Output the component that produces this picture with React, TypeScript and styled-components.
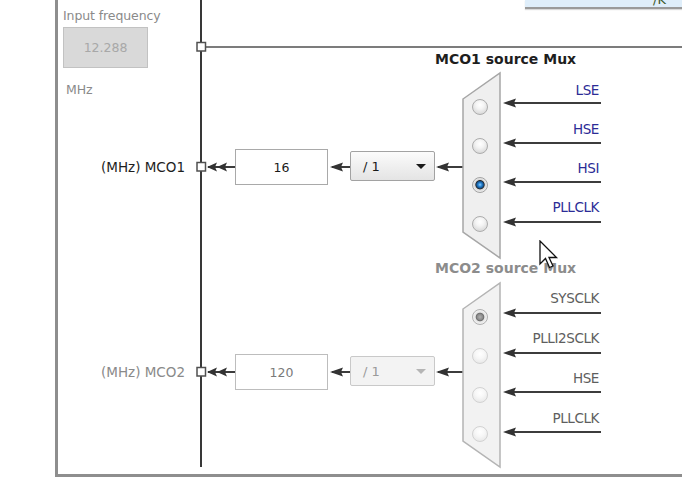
import React from 'react';
import styled, { createGlobalStyle, css } from 'styled-components';

const Global = createGlobalStyle`
  html, body { margin: 0; padding: 0; background: #ffffff; overflow: hidden; }
  body { font-family: "DejaVu Sans", "Liberation Sans", sans-serif; }
`;

const Page = styled.div`
  position: relative;
  width: 682px;
  height: 478px;
  display: flex;
  background: #ffffff;
  overflow: hidden;
`;

const Gutter = styled.div`
  width: 55px;
  flex: none;
`;

const Frame = styled.div`
  flex: 1;
  box-sizing: border-box;
  height: 477px;
  border-left: 3px solid #8e8e8e;
  border-bottom: 3px solid #8e8e8e;
  display: flex;
  flex-direction: column;
  align-items: flex-start;
  padding: 8px 0 0 5px;
`;

const PanelLabel = styled.div<{ $indent?: number; $gap?: number }>`
  font-size: 12.5px;
  line-height: 16px;
  color: #8a8a8a;
  margin-left: ${p => p.$indent ?? 0}px;
  margin-top: ${p => p.$gap ?? 0}px;
  letter-spacing: -0.1px;
`;

const FreqBox = styled.div`
  box-sizing: border-box;
  width: 85px;
  height: 41px;
  margin-top: 3px;
  background: #d9d9d9;
  border: 1px solid #c2c2c2;
  display: flex;
  align-items: center;
  justify-content: center;
  font-size: 12.5px;
  color: #a8a8a8;
`;

/* free canvas of the clock diagram */
const Diagram = styled.div`
  position: absolute;
  inset: 0;
  box-sizing: border-box;
  padding: 52px 0 0 60px;
  display: flex;
  flex-direction: column;
`;

const Wires = styled.svg`
  position: absolute;
  left: 0;
  top: 0;
`;

const Channel = styled.div<{ $bodyHeight: number; $titleGap: number }>`
  position: relative;
  display: grid;
  grid-template-columns: 125px 50px 93px 22px 85px 28px 37px 101px;
  grid-template-rows: 14px ${p => p.$bodyHeight}px;
  row-gap: ${p => p.$titleGap}px;
  align-items: center;
`;

const MuxTitle = styled.div<{ $disabled?: boolean }>`
  grid-column: 6 / -1;
  grid-row: 1;
  line-height: 14px;
  font-size: 14px;
  font-weight: bold;
  white-space: nowrap;
  color: ${p => (p.$disabled ? '#8c8c8c' : '#1e1e1e')};
`;

const RowLabel = styled.div<{ $disabled?: boolean }>`
  grid-column: 1;
  grid-row: 2;
  text-align: right;
  line-height: 16px;
  font-size: 13.5px;
  white-space: nowrap;
  color: ${p => (p.$disabled ? '#8a8a8a' : '#1e1e1e')};
`;

const ValueBox = styled.div<{ $disabled?: boolean }>`
  grid-column: 3;
  grid-row: 2;
  box-sizing: border-box;
  height: 36px;
  background: #ffffff;
  border: 1px solid ${p => (p.$disabled ? '#bdbdbd' : '#a9a9a9')};
  display: flex;
  align-items: center;
  justify-content: center;
  font-size: 12.5px;
  color: ${p => (p.$disabled ? '#7a7a7a' : '#1a1a1a')};
`;

const Dropdown = styled.div<{ $disabled?: boolean }>`
  grid-column: 5;
  grid-row: 2;
  box-sizing: border-box;
  height: 30px;
  margin-top: -2px;
  border-radius: 2px;
  display: flex;
  align-items: center;
  justify-content: space-between;
  padding: 0 8px 0 12px;
  font-size: 13px;
  ${p =>
    p.$disabled
      ? css`
          background: #f3f3f3;
          border: 1px solid #c9c9c9;
          color: #9a9a9a;
        `
      : css`
          background: linear-gradient(#fbfbfb, #e4e4e4);
          border: 1px solid #a2a2a2;
          color: #1a1a1a;
        `}
`;

const Caret = styled.span<{ $disabled?: boolean }>`
  width: 0;
  height: 0;
  border-left: 5px solid transparent;
  border-right: 5px solid transparent;
  border-top: 5px solid ${p => (p.$disabled ? '#b5b5b5' : '#1a1a1a')};
`;

const RadioColumn = styled.div`
  grid-column: 7;
  grid-row: 2;
  align-self: stretch;
  display: flex;
  flex-direction: column;
  align-items: flex-start;
  padding: 26px 0 0 9px;
  gap: 23px;
`;

const SourceColumn = styled.div<{ $pad: number; $gap: number }>`
  grid-column: 8;
  grid-row: 2;
  align-self: stretch;
  display: flex;
  flex-direction: column;
  align-items: flex-end;
  padding: ${p => p.$pad}px 2px 0 0;
  gap: ${p => p.$gap}px;
`;

const SourceLabel = styled.div<{ $disabled?: boolean }>`
  line-height: 16px;
  font-size: 13.5px;
  letter-spacing: -0.4px;
  white-space: nowrap;
  color: ${p => (p.$disabled ? '#5e5e5e' : '#2c2c96')};
`;

type RadioState = 'off' | 'on' | 'dimOn' | 'dimOff';

const radioLooks: Record<RadioState, ReturnType<typeof css>> = {
  off: css`
    border: 1.5px solid #acacac;
    background: radial-gradient(circle at 50% 35%, #ffffff 0, #f4f4f4 35%, #dcdcdc 75%, #c9c9c9 100%);
  `,
  on: css`
    border: 1.5px solid #a3a3a3;
    background: radial-gradient(circle at 50% 48%, #8fd0ff 0, #2a86d4 18%, #124f8a 34%, #2a2a2a 42%, #d8d8d8 50%, #efefef 72%, #cfcfcf 100%);
  `,
  dimOn: css`
    border: 1.5px solid #b0b0b0;
    background: radial-gradient(circle at 50% 50%, #b0b0b0 0, #8c8c8c 28%, #6e6e6e 38%, #e4e4e4 48%, #f3f3f3 72%, #d4d4d4 100%);
  `,
  dimOff: css`
    border: 1.5px solid #d2d2d2;
    background: radial-gradient(circle at 50% 35%, #ffffff 0, #f7f7f7 40%, #e9e9e9 80%, #dedede 100%);
  `,
};

const Radio = styled.div<{ $state: RadioState }>`
  box-sizing: border-box;
  width: 16px;
  height: 16px;
  flex: none;
  border-radius: 50%;
  ${p => radioLooks[p.$state]}
`;

const OtherPanel = styled.div`
  position: absolute;
  left: 525px;
  top: 0;
  width: 157px;
  height: 7px;
  background: #dfeefa;
  border-bottom: 2px solid #9a9a9a;
  box-shadow: 0 1px 1px rgba(0, 0, 0, 0.15);
  overflow: hidden;
`;

const OtherPanelText = styled.span`
  position: absolute;
  left: 128px;
  top: -7px;
  font-size: 13px;
  line-height: 14px;
  color: #3d5a2a;
`;

const Cursor = styled.svg`
  position: absolute;
  left: 539px;
  top: 240px;
`;

const WIRE = '#3c3c3c';

function ArrowHead({ x, y, len = 13, half = 4.5 }: { x: number; y: number; len?: number; half?: number }) {
  return <polygon points={`${x},${y} ${x + len},${y - half} ${x + len - 2},${y} ${x + len},${y + half}`} fill="#333" />;
}

function HLine({ x1, x2, y, color = WIRE }: { x1: number; x2: number; y: number; color?: string }) {
  return <line x1={x1} x2={x2} y1={y} y2={y} stroke={color} strokeWidth={2} />;
}

function Connector({ y }: { y: number }) {
  return <rect x={197} y={y - 4.5} width={8.5} height={8.5} fill="#ffffff" stroke="#505050" strokeWidth={1.5} />;
}

function OutputRow({ y }: { y: number }) {
  return (
    <g>
      <Connector y={y} />
      <HLine x1={208} x2={235} y={y} />
      <ArrowHead x={207} y={y} len={10} />
      <ArrowHead x={217} y={y} len={10} />
      <HLine x1={332} x2={350} y={y} />
      <ArrowHead x={330} y={y} />
      <HLine x1={438} x2={463} y={y} />
      <ArrowHead x={436} y={y} />
    </g>
  );
}

function MuxShape({ top, bottom, disabled }: { top: number; bottom: number; disabled?: boolean }) {
  const pts = `463,${top + 26} 500,${top} 500,${bottom} 463,${bottom - 26}`;
  return <polygon points={pts} fill={disabled ? '#f2f2f2' : '#efefef'} stroke={disabled ? '#b4b4b4' : '#a6a6a6'} strokeWidth={1.5} />;
}

type Source = { name: string; wire: number; state: RadioState };

const mco1Inputs: Source[] = [
  { name: 'LSE', wire: 103, state: 'off' },
  { name: 'HSE', wire: 143, state: 'off' },
  { name: 'HSI', wire: 182, state: 'on' },
  { name: 'PLLCLK', wire: 222, state: 'off' },
];

const mco2Inputs: Source[] = [
  { name: 'SYSCLK', wire: 313, state: 'dimOn' },
  { name: 'PLLI2SCLK', wire: 353, state: 'dimOff' },
  { name: 'HSE', wire: 392, state: 'dimOff' },
  { name: 'PLLCLK', wire: 432, state: 'dimOff' },
];

type ChannelProps = {
  title: string;
  output: string;
  value: string;
  sources: Source[];
  disabled?: boolean;
  bodyHeight: number;
  titleGap: number;
  labelPad: number;
  labelGap: number;
};

function MCOChannel({ title, output, value, sources, disabled, bodyHeight, titleGap, labelPad, labelGap }: ChannelProps) {
  return (
    <Channel $bodyHeight={bodyHeight} $titleGap={titleGap}>
      <MuxTitle $disabled={disabled}>{title}</MuxTitle>
      <RowLabel $disabled={disabled}>(MHz) {output}</RowLabel>
      <ValueBox $disabled={disabled}>{value}</ValueBox>
      <Dropdown $disabled={disabled}>
        <span>/ 1</span>
        <Caret $disabled={disabled} />
      </Dropdown>
      <RadioColumn>
        {sources.map(s => (
          <Radio key={s.name} $state={s.state} />
        ))}
      </RadioColumn>
      <SourceColumn $pad={labelPad} $gap={labelGap}>
        {sources.map(s => (
          <SourceLabel key={s.name} $disabled={disabled}>
            {s.name}
          </SourceLabel>
        ))}
      </SourceColumn>
    </Channel>
  );
}

export default function App() {
  return (
    <>
      <Global />
      <Page>
        <Gutter />
        <Frame>
          <PanelLabel>Input frequency</PanelLabel>
          <FreqBox>12.288</FreqBox>
          <PanelLabel $indent={3} $gap={14}>MHz</PanelLabel>
        </Frame>

        <Wires width={682} height={478} viewBox="0 0 682 478">
          <line x1={201} x2={201} y1={0} y2={467} stroke="#383838" strokeWidth={2} />
          <HLine x1={206} x2={682} y={47} color="#7c7c7c" />
          <Connector y={47} />

          <OutputRow y={167} />
          <OutputRow y={372} />

          <MuxShape top={73} bottom={258} />
          <MuxShape top={283} bottom={467} disabled />

          {[...mco1Inputs, ...mco2Inputs].map(i => (
            <g key={i.name + i.wire}>
              <HLine x1={514} x2={601} y={i.wire} />
              <ArrowHead x={503} y={i.wire} />
            </g>
          ))}
        </Wires>

        <Diagram>
          <MCOChannel
            title="MCO1 source Mux"
            output="MCO1"
            value="16"
            sources={mco1Inputs}
            bodyHeight={188}
            titleGap={7}
            labelPad={9}
            labelGap={23}
          />
          <MCOChannel
            title="MCO2 source Mux"
            output="MCO2"
            value="120"
            sources={mco2Inputs}
            disabled
            bodyHeight={178}
            titleGap={8}
            labelPad={7}
            labelGap={24}
          />
        </Diagram>

        <OtherPanel>
          <OtherPanelText>/K</OtherPanelText>
        </OtherPanel>

        <Cursor width={20} height={30} viewBox="0 0 20 30">
          <path
            d="M1 1 L1 24 L6.5 18.5 L10.5 27.5 L14 26 L10 17.5 L17.5 17.5 Z"
            fill="#ffffff"
            stroke="#111111"
            strokeWidth={1.3}
            strokeLinejoin="miter"
          />
        </Cursor>
      </Page>
    </>
  );
}
